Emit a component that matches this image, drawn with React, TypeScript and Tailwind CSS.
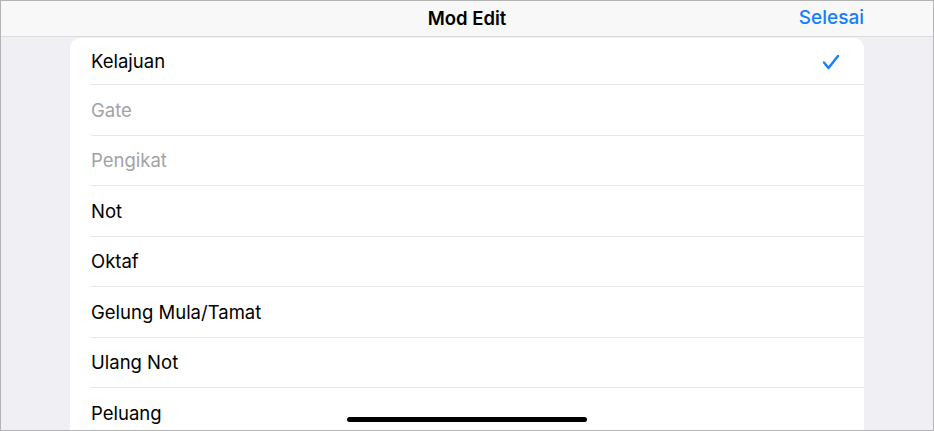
import React from 'react';

const rows = [
  { label: 'Kelajuan', disabled: false, checked: true },
  { label: 'Gate', disabled: true },
  { label: 'Pengikat', disabled: true },
  { label: 'Not' },
  { label: 'Oktaf' },
  { label: 'Gelung Mula/Tamat' },
  { label: 'Ulang Not' },
  { label: 'Peluang' },
];

export default function App() {
  return (
    <div
      className="relative w-[934px] h-[431px] overflow-hidden border border-[#b4b4b4] bg-[#efeff4] flex flex-col"
      style={{ fontFamily: 'Inter, "Noto Sans", sans-serif' }}
    >
      <div className="h-[36px] shrink-0 bg-[#f8f8f8] border-b border-[#dcdcdf] flex items-center relative">
        <div className="absolute inset-0 flex items-center justify-center text-[18.5px] font-semibold text-black">
          Mod Edit
        </div>
        <div className="ml-auto mr-[69px] text-[19px] font-medium text-[#157efb]">
          Selesai
        </div>
      </div>

      <div className="mx-[69px] mt-px bg-white rounded-t-[10px] flex-1">
        {rows.map((row, i) => (
          <div
            key={row.label}
            className={`${i === 0 ? 'h-[47px]' : 'h-[50.5px]'} pl-[21px] flex`}
          >
            <div
              className={`flex-1 flex items-center pr-[24px] pt-[2px] ${
                i < rows.length - 1 ? 'border-b border-[#e6e6ea]' : ''
              }`}
            >
              <span
                className={`text-[18.5px] ${
                  row.disabled ? 'text-[#a2a2a6]' : 'text-black'
                }`}
              >
                {row.label}
              </span>
              {row.checked && (
                <svg className="ml-auto" width="18" height="16" viewBox="0 0 18 16">
                  <path
                    d="M2 8.5 L6.5 14 L16 2"
                    fill="none"
                    stroke="#157efb"
                    strokeWidth="2.4"
                    strokeLinecap="round"
                    strokeLinejoin="round"
                  />
                </svg>
              )}
            </div>
          </div>
        ))}
      </div>

      <div className="absolute left-[346px] top-[416px] w-[240px] h-[5px] rounded-full bg-black" />
    </div>
  );
}
